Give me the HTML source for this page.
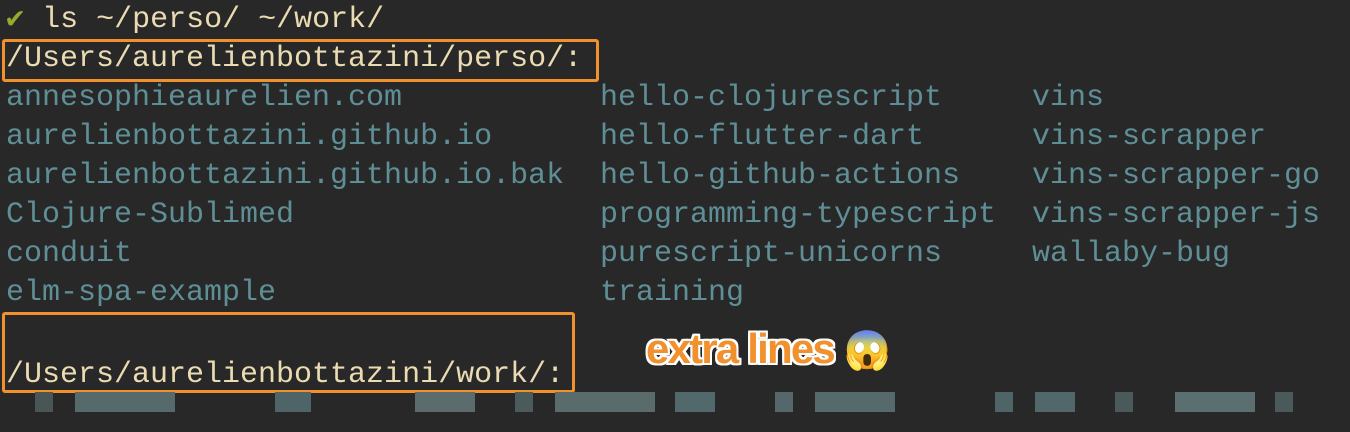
<!DOCTYPE html>
<html><head><meta charset="utf-8"><style>
html,body{margin:0;padding:0;background:#282828;width:1350px;height:432px;overflow:hidden;}
.t{position:absolute;font-family:"Liberation Mono",monospace;font-size:30px;line-height:39px;white-space:pre;}
.y{color:#ebdbb2}.b{color:#5f8f96}.g{color:#98a82a}
.box{position:absolute;border:3px solid #f0912e;border-radius:3px;}
.pix{position:absolute;top:392px;height:20px;}
.lbl{position:absolute;left:646px;top:322px;font-family:"Liberation Sans",sans-serif;font-weight:bold;font-size:42px;line-height:50px;color:#f0912e;letter-spacing:-1.8px;
text-shadow:-2px -2px 0 #fff,2px -2px 0 #fff,-2px 2px 0 #fff,2px 2px 0 #fff,0 2px 0 #fff,0 -2px 0 #fff,2px 0 0 #fff,-2px 0 0 #fff;}
</style></head><body>
<div class="t" style="left:6px;top:1px"><span class="g">✔</span><span class="y"> ls ~/perso/ ~/work/</span></div>
<div class="t y" style="left:6px;top:40px">/Users/aurelienbottazini/perso/:</div>
<div class="t b" style="left:6px;top:79px">annesophieaurelien.com
aurelienbottazini.github.io
aurelienbottazini.github.io.bak
Clojure-Sublimed
conduit
elm-spa-example</div>
<div class="t b" style="left:600px;top:79px">hello-clojurescript
hello-flutter-dart
hello-github-actions
programming-typescript
purescript-unicorns
training</div>
<div class="t b" style="left:1032px;top:79px">vins
vins-scrapper
vins-scrapper-go
vins-scrapper-js
wallaby-bug</div>
<div class="t y" style="left:6px;top:356px">/Users/aurelienbottazini/work/:</div>
<div class="box" style="left:2px;top:39px;width:591px;height:37px"></div>
<div class="box" style="left:2px;top:312px;width:567px;height:75px"></div>
<div class="lbl">extra lines <span style="font-family:'Noto Sans CJK JP',sans-serif;text-shadow:none;color:#e0b030;font-size:38px">😱</span></div>
<div class="pix" style="left:35px;width:18px;background:#4a5556"></div>
<div class="pix" style="left:75px;width:100px;background:#566a6c"></div>
<div class="pix" style="left:275px;width:36px;background:#4f6466"></div>
<div class="pix" style="left:415px;width:60px;background:#5c6c6d"></div>
<div class="pix" style="left:515px;width:18px;background:#4b5b5c"></div>
<div class="pix" style="left:555px;width:100px;background:#5a6b6c"></div>
<div class="pix" style="left:675px;width:40px;background:#52696b"></div>
<div class="pix" style="left:775px;width:18px;background:#55676a"></div>
<div class="pix" style="left:815px;width:80px;background:#56696b"></div>
<div class="pix" style="left:995px;width:18px;background:#4f6466"></div>
<div class="pix" style="left:1035px;width:40px;background:#52676a"></div>
<div class="pix" style="left:1115px;width:18px;background:#4a5a5b"></div>
<div class="pix" style="left:1175px;width:80px;background:#5b6f70"></div>
<div class="pix" style="left:1275px;width:18px;background:#4a5a5b"></div>
</body></html>
